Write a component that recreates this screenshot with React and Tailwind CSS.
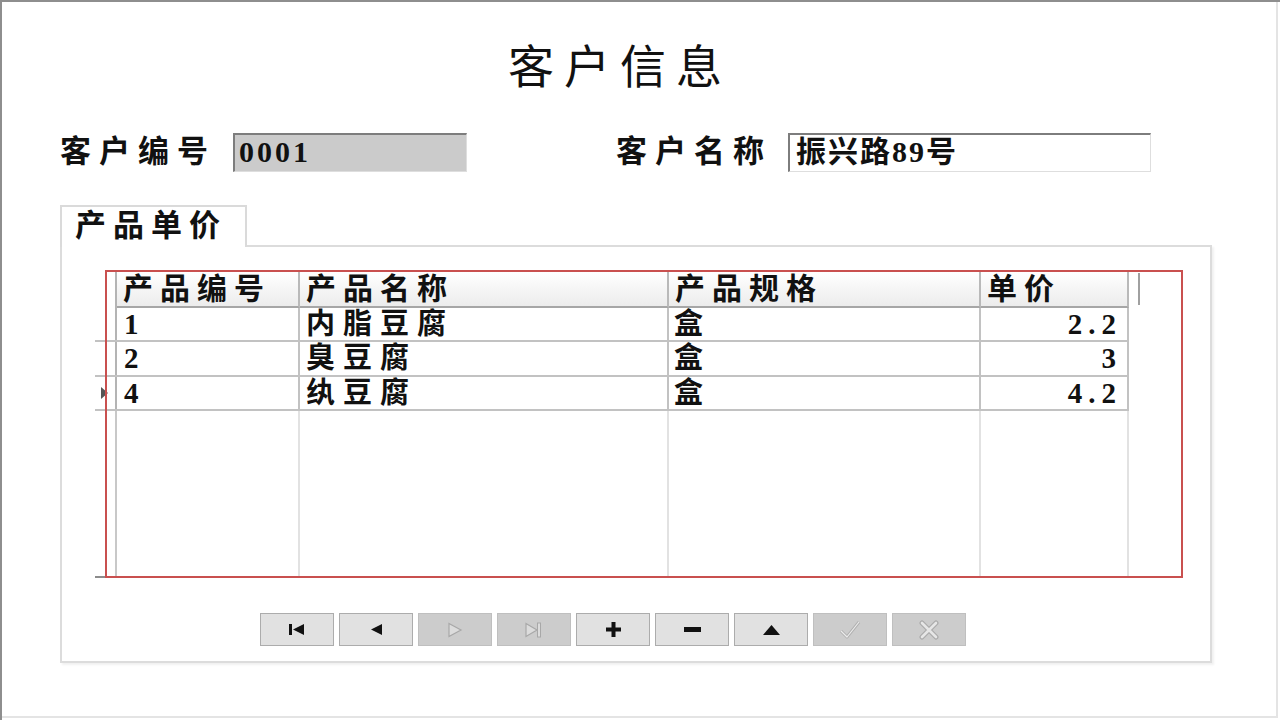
import React from "react";

const serif = { fontFamily: '"Liberation Serif", "Noto Sans CJK SC", serif' };

const columns = [
  { key: "id", title: "产品编号", width: "w-[183px]" },
  { key: "name", title: "产品名称", width: "w-[369px]" },
  { key: "spec", title: "产品规格", width: "w-[312px]" },
  { key: "price", title: "单价", width: "w-[148px]" },
];

const rows = [
  { id: "1", name: "内脂豆腐", spec: "盒", price: "2.2", h: "h-[34px]" },
  { id: "2", name: "臭豆腐", spec: "盒", price: "3", h: "h-[35px]" },
  { id: "4", name: "纨豆腐", spec: "盒", price: "4.2", h: "h-[34px]", current: true },
];

// navigator icons
const First = () => (
  <svg width="18" height="13" viewBox="0 0 18 13">
    <rect x="1" y="1" width="3" height="11" fill="#111" />
    <path d="M5 6.5 L16 1 L16 12 Z" fill="#111" />
  </svg>
);
const Prior = () => (
  <svg width="13" height="13" viewBox="0 0 13 13">
    <path d="M1 6.5 L12 1 L12 12 Z" fill="#111" />
  </svg>
);
const Next = () => (
  <svg width="16" height="16" viewBox="0 0 16 16">
    <path d="M2 1.5 L14 8 L2 14.5 Z" fill="#dcdcdc" stroke="#a8a8a8" strokeWidth="1.2" />
  </svg>
);
const Last = () => (
  <svg width="20" height="16" viewBox="0 0 20 16">
    <path d="M2 1.5 L13 8 L2 14.5 Z" fill="#dcdcdc" stroke="#a8a8a8" strokeWidth="1.2" />
    <rect x="13.5" y="1" width="3" height="14" fill="#dcdcdc" stroke="#a8a8a8" strokeWidth="1" />
  </svg>
);
const Plus = () => (
  <svg width="15" height="15" viewBox="0 0 15 15">
    <path d="M5.5 0 H9.5 V5.5 H15 V9.5 H9.5 V15 H5.5 V9.5 H0 V5.5 H5.5 Z" fill="#111" />
  </svg>
);
const Minus = () => (
  <svg width="17" height="6" viewBox="0 0 17 6">
    <rect x="0" y="0" width="17" height="5" fill="#111" />
  </svg>
);
const Up = () => (
  <svg width="17" height="10" viewBox="0 0 17 10">
    <path d="M8.5 0 L17 10 L0 10 Z" fill="#111" />
  </svg>
);
const Check = () => (
  <svg width="22" height="20" viewBox="0 0 22 20">
    <path d="M2 11 L8 17 L20 2" fill="none" stroke="#b0b0b0" strokeWidth="3" strokeLinejoin="round" />
    <path d="M2 11 L8 17 L20 2" fill="none" stroke="#ececec" strokeWidth="1.2" strokeLinejoin="round" />
  </svg>
);
const Cancel = () => (
  <svg width="22" height="20" viewBox="0 0 22 20">
    <path d="M4 3 L18 17 M18 3 L4 17" fill="none" stroke="#ababab" strokeWidth="5" strokeLinecap="round" />
    <path d="M4 3 L18 17 M18 3 L4 17" fill="none" stroke="#e6e6e6" strokeWidth="2.6" strokeLinecap="round" />
  </svg>
);

const buttons = [
  { icon: <First />, enabled: true },
  { icon: <Prior />, enabled: true },
  { icon: <Next />, enabled: false },
  { icon: <Last />, enabled: false },
  { icon: <Plus />, enabled: true },
  { icon: <Minus />, enabled: true },
  { icon: <Up />, enabled: true },
  { icon: <Check />, enabled: false },
  { icon: <Cancel />, enabled: false },
];

const DataGrid = () => {
  return (
    <div className="relative ml-[33px] w-[1150px] h-[307px]">
      <div className="flex flex-col w-[1034px] h-[307px] border-b-2 border-[#8c8c8c]">
        {/* header */}
        <div className="flex h-[37px] pt-[1px]">
          <div className="shrink-0 w-[22px] border-r-2 border-[#b4b4b4] bg-white"></div>
          {columns.map((c) => (
            <div
              key={c.key}
              className={`shrink-0 ${c.width} h-[36px] border-r-2 border-[#b9b9b9] border-b-2 border-b-[#a6a6a6] bg-gradient-to-b from-white to-[#ececec] pl-[6px] text-[30px] leading-[34px] font-bold tracking-[7px] text-[#111] whitespace-nowrap overflow-hidden`}
            >
              {c.title}
            </div>
          ))}
          <div className="shrink-0 ml-[9px] mt-[1px] w-[2px] h-[32px] bg-[#a0a0a0]"></div>
        </div>
        {/* rows */}
        {rows.map((r) => (
          <div key={r.id} className={`flex ${r.h} border-b-2 border-[#c2c2c2]`}>
            <div className="shrink-0 w-[22px] border-r-2 border-[#b4b4b4] flex items-center">
              {r.current && (
                <svg className="ml-[6px]" width="7" height="12" viewBox="0 0 7 12">
                  <path d="M0 0 L7 6 L0 12 Z" fill="#555" />
                </svg>
              )}
            </div>
            <div className="shrink-0 w-[183px] border-r-2 border-[#c2c2c2] pl-[7px] text-[29px] leading-[33px] font-bold text-[#111]">
              {r.id}
            </div>
            <div className="shrink-0 w-[369px] border-r-2 border-[#c2c2c2] pl-[6px] text-[29px] leading-[33px] font-bold tracking-[8px] text-[#111] whitespace-nowrap">
              {r.name}
            </div>
            <div className="shrink-0 w-[312px] border-r-2 border-[#c2c2c2] pl-[5px] text-[29px] leading-[33px] font-bold text-[#111]">
              {r.spec}
            </div>
            <div className="shrink-0 w-[148px] border-r-2 border-[#c2c2c2] pr-[5px] text-right text-[29px] leading-[33px] font-bold tracking-[6px] text-[#111]">
              {r.price}
            </div>
          </div>
        ))}
        {/* empty area with column lines */}
        <div className="flex flex-1">
          <div className="shrink-0 w-[22px] border-r-2 border-[#c8c8c8]"></div>
          <div className="shrink-0 w-[183px] border-r-2 border-[#e2e2e2]"></div>
          <div className="shrink-0 w-[369px] border-r-2 border-[#e2e2e2]"></div>
          <div className="shrink-0 w-[312px] border-r-2 border-[#e2e2e2]"></div>
          <div className="shrink-0 w-[148px] border-r-2 border-[#e2e2e2]"></div>
        </div>
      </div>
      {/* red selection frame drawn over the grid */}
      <div className="absolute left-[10px] top-[-1px] w-[1078px] h-[308px] border-2 border-[#c9504f] pointer-events-none"></div>
    </div>
  );
};

export default function App() {
  return (
    <div
      className="w-[1280px] h-[720px] overflow-hidden bg-white border-t-2 border-l-2 border-[#8e8e8e]"
      style={serif}
    >
      <div className="w-[1276px] h-[716px] border-r-2 border-b-2 border-[#e4e4e4] flex flex-col">
        {/* title */}
        <div className="pt-[42px] pl-[506px] h-[94px] text-[46px] leading-[48px] tracking-[10px] text-[#111]">
          客户信息
        </div>

        {/* customer fields */}
        <div className="mt-[37px] flex items-center h-[39px]">
          <div className="ml-[58px] w-[173px] text-[31px] font-bold tracking-[8px] text-[#111] whitespace-nowrap">
            客户编号
          </div>
          <div className="w-[234px] h-[39px] bg-[#cbcbcb] border-t-2 border-l-2 border-[#7d7d7d] border-r border-b border-r-[#dedede] border-b-[#dedede] pl-[4px] text-[30px] leading-[34px] font-bold tracking-[3px] text-[#111]">
            0001
          </div>
          <div className="ml-[149px] w-[172px] text-[31px] font-bold tracking-[8px] text-[#111] whitespace-nowrap">
            客户名称
          </div>
          <div className="w-[363px] h-[39px] bg-white border-t-2 border-l-2 border-[#7d7d7d] border-r border-b border-r-[#dedede] border-b-[#dedede] pl-[6px] text-[30px] leading-[34px] font-bold tracking-[2px] text-[#111] whitespace-nowrap">
            振兴路89号
          </div>
        </div>

        {/* tab */}
        <div className="mt-[33px] ml-[58px] flex">
          <div className="w-[187px] h-[42px] border-t-2 border-l-2 border-r-2 border-[#dadada] bg-white pl-[13px] text-[31px] leading-[38px] font-bold tracking-[7px] text-[#111] whitespace-nowrap relative z-10 -mb-[2px]">
            产品单价
          </div>
        </div>

        {/* tab sheet */}
        <div className="ml-[58px] w-[1152px] h-[418px] border-2 border-[#dcdcdc] shadow-[2px_2px_2px_rgba(0,0,0,0.06)] pt-[24px] flex flex-col">
          <DataGrid />
          <div className="mt-[35px] ml-[198px] flex gap-[5px]">
            {buttons.map((b, i) => (
              <div
                key={i}
                className={`w-[74px] h-[33px] flex items-center justify-center border ${
                  b.enabled ? "bg-[#e1e1e1] border-[#acacac]" : "bg-[#cccccc] border-[#bfbfbf]"
                }`}
              >
                {b.icon}
              </div>
            ))}
          </div>
        </div>
      </div>
    </div>
  );
}
